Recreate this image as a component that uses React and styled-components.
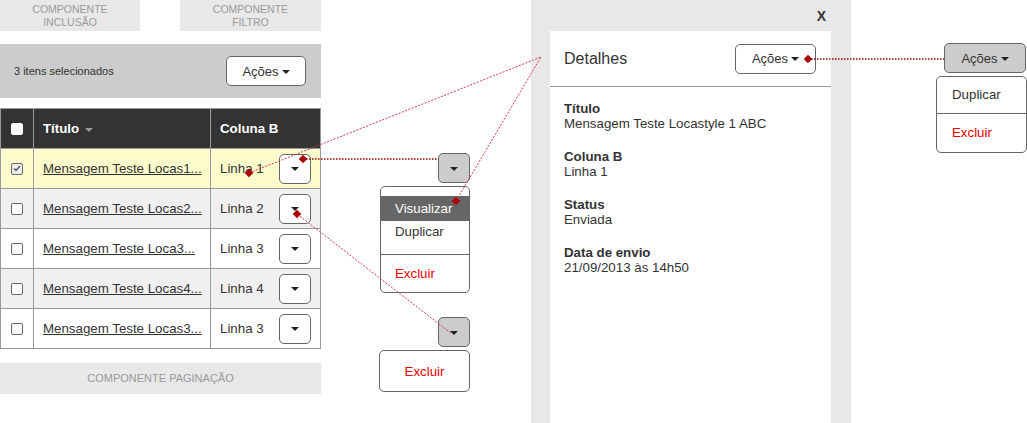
import React from 'react'
import styled, { createGlobalStyle } from 'styled-components'

const GlobalStyle = createGlobalStyle`
  body {
    margin: 0;
    background: #fff;
    font-family: "Liberation Sans", Arial, sans-serif;
    color: #333;
  }
`

const Canvas = styled.div`
  position: relative;
  width: 1027px;
  height: 423px;
  overflow: hidden;
  display: flex;
  align-items: flex-start;
`

const LeftColumn = styled.div`
  width: 321px;
  display: flex;
  flex-direction: column;
`

const Tabs = styled.div`
  display: flex;
  justify-content: space-between;
  height: 31px;
`

const Placeholder = styled.div`
  width: ${p => p.width || 140}px;
  height: 31px;
  background: #e8e8e8;
  color: #9a9a9a;
  font-size: ${p => p.size || 10.5}px;
  line-height: 13px;
  text-align: center;
  display: flex;
  align-items: center;
  justify-content: center;
  margin-top: ${p => p.top || 0}px;
`

const Toolbar = styled.div`
  margin-top: 13px;
  height: 54px;
  background: #ccc;
  display: flex;
  align-items: center;
  justify-content: space-between;
  padding: 0 15px 0 14px;
  font-size: 11px;
  color: #333;
`

const Button = styled.div`
  box-sizing: border-box;
  width: ${p => p.width || 32}px;
  height: 30px;
  border: 1px solid #666;
  border-radius: 5px;
  background: ${p => (p.gray ? '#ccc' : '#fff')};
  display: flex;
  align-items: center;
  justify-content: center;
  gap: 3px;
  font-size: 13px;
  color: #333;
  flex-shrink: 0;
`

const Caret = styled.span`
  display: inline-block;
  width: 0;
  height: 0;
  border-left: 4px solid transparent;
  border-right: 4px solid transparent;
  border-top: 4px solid ${p => p.color || '#222'};
  margin-top: ${p => p.shift || 1}px;
`

const Table = styled.div`
  margin-top: 10px;
  box-sizing: border-box;
  border: 1px solid #999;
  border-bottom: none;
`

const Row = styled.div`
  display: grid;
  grid-template-columns: 32px 177px 110px;
  height: 40px;
  box-sizing: border-box;
  border-bottom: 1px solid #999;
  background: ${p => p.bg || '#fff'};
  font-size: 13.3px;
  color: ${p => (p.head ? '#fff' : '#333')};
  font-weight: ${p => (p.head ? 'bold' : 'normal')};
`

const Cell = styled.div`
  display: flex;
  align-items: center;
  justify-content: ${p => (p.center ? 'center' : p.start ? 'flex-start' : 'space-between')};
  padding: 0 ${p => (p.center ? 0 : 9)}px;
  border-left: ${p => (p.first ? 'none' : '1px solid #999')};
  gap: 6px;
  white-space: nowrap;
`

const TitleLink = styled.a`
  color: #333;
  text-decoration: underline;
`

const Check = styled.span`
  box-sizing: border-box;
  width: 12px;
  height: 12px;
  border: 1px solid ${p => (p.head ? '#fff' : '#666')};
  border-radius: 2px;
  background: ${p => (p.checked ? '#eee' : '#fff')};
  display: flex;
  align-items: center;
  justify-content: center;
`

const MiddleColumn = styled.div`
  width: 91px;
  margin-left: 58px;
  padding-top: 153px;
  display: flex;
  flex-direction: column;
  align-items: flex-end;
`

const Menu = styled.div`
  box-sizing: border-box;
  width: ${p => p.width || 90}px;
  margin-top: 3px;
  border: 1px solid #666;
  border-radius: 5px;
  background: #fff;
  padding-top: ${p => p.padTop || 0}px;
  font-size: 13.3px;
`

const MenuItem = styled.div`
  height: ${p => p.h || 25}px;
  line-height: ${p => p.h || 25}px;
  padding-left: ${p => p.pad || 14}px;
  background: ${p => (p.active ? '#666' : 'transparent')};
  color: ${p => (p.active ? '#fff' : p.danger ? '#e00' : '#333')};
  border-top: ${p => (p.divider ? '1px solid #666' : 'none')};
  margin-bottom: ${p => p.mb || 0}px;
`

const DangerBox = styled.div`
  box-sizing: border-box;
  width: 91px;
  height: 42px;
  margin-top: 3px;
  border: 1px solid #666;
  border-radius: 5px;
  display: flex;
  align-items: center;
  justify-content: center;
  color: #e00;
  font-size: 13.3px;
`

const DetailPanel = styled.div`
  width: 320px;
  height: 423px;
  margin-left: 61px;
  background: #e8e8e8;
  display: flex;
  flex-direction: column;
`

const CloseRow = styled.div`
  height: 31px;
  display: flex;
  align-items: center;
  justify-content: flex-end;
  padding-right: 25px;
  font-size: 14px;
  font-weight: bold;
  color: #333;
`

const Card = styled.div`
  margin-left: 19px;
  width: 281px;
  flex: 1;
  background: #fff;
`

const CardHeader = styled.div`
  height: 55px;
  border-bottom: 1px solid #999;
  display: flex;
  align-items: center;
  justify-content: space-between;
  padding: 0 15px 0 14px;
  font-size: 16px;
  color: #333;
`

const Fields = styled.div`
  padding: 14px 14px 0;
  display: flex;
  flex-direction: column;
  gap: 18px;
  font-size: 13.3px;
  line-height: 15px;
`

const Label = styled.div`
  font-weight: bold;
`

const RightColumn = styled.div`
  width: 91px;
  margin-left: 85px;
  padding-top: 43px;
  display: flex;
  flex-direction: column;
  align-items: flex-end;
`

const Connectors = styled.svg`
  position: absolute;
  left: 0;
  top: 0;
  pointer-events: none;
`

const rows = [
  { title: 'Mensagem Teste Locas1...', col: 'Linha 1', bg: '#fbfbcb', checked: true },
  { title: 'Mensagem Teste Locas2...', col: 'Linha 2', bg: '#f0f0f0' },
  { title: 'Mensagem Teste Loca3...', col: 'Linha 3', bg: '#fff' },
  { title: 'Mensagem Teste Locas4...', col: 'Linha 4', bg: '#f0f0f0' },
  { title: 'Mensagem Teste Locas3...', col: 'Linha 3', bg: '#fff' },
]

const fields = [
  ['Título', 'Mensagem Teste Locastyle 1 ABC'],
  ['Coluna B', 'Linha 1'],
  ['Status', 'Enviada'],
  ['Data de envio', '21/09/2013 às 14h50'],
]

const Dot = ({ x, y }) => (
  <rect x={x - 3} y={y - 3} width="6" height="6" fill="#a00" transform={`rotate(45 ${x} ${y})`}/>
)

const App = () => (
  <Canvas>
    <GlobalStyle/>

    <LeftColumn>
      <Tabs>
        <Placeholder width={140}>COMPONENTE<br/>INCLUSÃO</Placeholder>
        <Placeholder width={141}>COMPONENTE<br/>FILTRO</Placeholder>
      </Tabs>

      <Toolbar>
        <span>3 itens selecionados</span>
        <Button width={80}>Ações <Caret/></Button>
      </Toolbar>

      <Table>
        <Row head bg={'#333'}>
          <Cell first center><Check head/></Cell>
          <Cell start>Título <Caret color={'#999'} shift={2}/></Cell>
          <Cell>Coluna B</Cell>
        </Row>

        {rows.map((row, i) => (
          <Row key={i} bg={row.bg}>
            <Cell first center>
              <Check checked={row.checked}>
                {row.checked && (
                  <svg width="8" height="7" viewBox="0 0 8 7">
                    <path d="M1 3.5 L3 5.5 L7 1" stroke="#555" strokeWidth="1.4" fill="none"/>
                  </svg>
                )}
              </Check>
            </Cell>
            <Cell><TitleLink>{row.title}</TitleLink></Cell>
            <Cell>
              {row.col}
              <Button><Caret/></Button>
            </Cell>
          </Row>
        ))}
      </Table>

      <Placeholder width={321} size={11} top={14}>COMPONENTE PAGINAÇÃO</Placeholder>
    </LeftColumn>

    <MiddleColumn>
      <Button gray><Caret/></Button>
      <Menu padTop={9}>
        <MenuItem active>Visualizar</MenuItem>
        <MenuItem h={22} mb={11}>Duplicar</MenuItem>
        <MenuItem divider danger h={37}>Excluir</MenuItem>
      </Menu>

      <Button gray style={{ marginTop: 24 }}><Caret/></Button>
      <DangerBox>Excluir</DangerBox>
    </MiddleColumn>

    <DetailPanel>
      <CloseRow>X</CloseRow>
      <Card>
        <CardHeader>
          Detalhes
          <Button width={81}>Ações <Caret/></Button>
        </CardHeader>
        <Fields>
          {fields.map(([label, value]) => (
            <div key={label}>
              <Label>{label}</Label>
              <div>{value}</div>
            </div>
          ))}
        </Fields>
      </Card>
    </DetailPanel>

    <RightColumn>
      <Button gray width={82} style={{ marginRight: 1 }}>Ações <Caret/></Button>
      <Menu width={91}>
        <MenuItem h={36} pad={15}>Duplicar</MenuItem>
        <MenuItem divider danger h={38} pad={15}>Excluir</MenuItem>
      </Menu>
    </RightColumn>

    <Connectors width="1027" height="423">
      <g stroke="#d43a4a" strokeWidth="1" strokeDasharray="2 1.5" fill="none">
        <line x1="249" y1="173" x2="541" y2="57"/>
        <line x1="456" y1="201" x2="541" y2="57"/>
        <line x1="297" y1="214" x2="452" y2="334"/>
      </g>
      <g stroke="#900" strokeWidth="1.5" strokeDasharray="1.5 1.5" fill="none">
        <line x1="303" y1="159" x2="438" y2="159"/>
        <line x1="808" y1="59" x2="944" y2="59"/>
      </g>
      <Dot x={249} y={173}/>
      <Dot x={303} y={159}/>
      <Dot x={456} y={201}/>
      <Dot x={297} y={214}/>
      <Dot x={808} y={59}/>
    </Connectors>
  </Canvas>
)

export default App
